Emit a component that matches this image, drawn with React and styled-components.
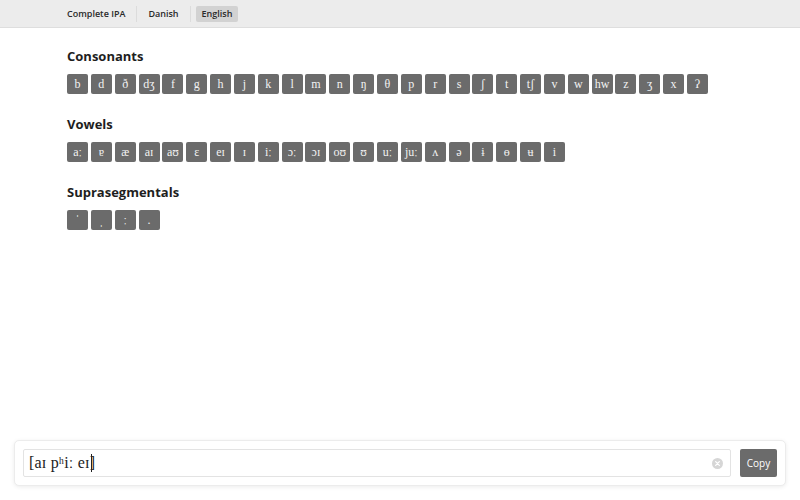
import React from 'react';
import styled, { createGlobalStyle } from 'styled-components';

const GlobalStyle = createGlobalStyle`
  html, body {
    margin: 0;
    padding: 0;
    height: 100%;
    background: #ffffff;
    font-family: "Open Sans", "DejaVu Sans", sans-serif;
  }
  #root {
    height: 100%;
  }
`;

const consonants = ['b', 'd', 'ð', 'dʒ', 'f', 'g', 'h', 'j', 'k', 'l', 'm', 'n', 'ŋ', 'θ', 'p', 'r', 's', 'ʃ', 't', 'tʃ', 'v', 'w', 'hw', 'z', 'ʒ', 'x', 'ʔ'];
const vowels = ['aː', 'ɐ', 'æ', 'aɪ', 'aʊ', 'ɛ', 'eɪ', 'ɪ', 'iː', 'ɔː', 'ɔɪ', 'oʊ', 'ʊ', 'uː', 'juː', 'ʌ', 'ə', 'ɨ', 'ɵ', 'ʉ', 'i'];
const suprasegmentals = ['ˈ', 'ˌ', 'ː', '.'];

const sections = [
  { title: 'Consonants', symbols: consonants },
  { title: 'Vowels', symbols: vowels },
  { title: 'Suprasegmentals', symbols: suprasegmentals },
];

const tabs = ['Complete IPA', 'Danish', 'English'];

function App() {
  return (
    <Page>
      <GlobalStyle />
      <TopBar>
        {tabs.map((tab, i) => (
          <React.Fragment key={tab}>
            {i > 0 && <Divider />}
            <Tab $active={tab === 'English'}>{tab}</Tab>
          </React.Fragment>
        ))}
      </TopBar>

      <Main>
        {sections.map((section) => (
          <Section key={section.title}>
            <Heading>{section.title}</Heading>
            <KeyRow>
              {section.symbols.map((s) => (
                <Key key={s}>{s}</Key>
              ))}
            </KeyRow>
          </Section>
        ))}
      </Main>

      <Footer>
        <Field>
          <FieldText>[aɪ pʰiː eɪ]</FieldText>
          <Caret />
          <ClearIcon viewBox="0 0 12 12">
            <circle cx="6" cy="6" r="6" fill="#d6d6d6" />
            <path d="M4 4 L8 8 M8 4 L4 8" stroke="#ffffff" strokeWidth="1.4" strokeLinecap="round" />
          </ClearIcon>
        </Field>
        <CopyButton>Copy</CopyButton>
      </Footer>
    </Page>
  );
}

const Page = styled.div`
  display: flex;
  flex-direction: column;
  min-height: 100vh;
`;

const TopBar = styled.nav`
  display: flex;
  align-items: center;
  gap: 5px;
  height: 28px;
  padding-left: 61px;
  background: #ececec;
  border-bottom: 1px solid #dedede;
  box-sizing: border-box;
`;

const Tab = styled.div`
  padding: 3px 6px;
  border-radius: 2px;
  font-family: "Open Sans", sans-serif;
  font-size: 9px;
  font-weight: 600;
  line-height: 10px;
  color: #2a2a2a;
  background: ${(p) => (p.$active ? '#d2d2d2' : 'transparent')};
`;

const Divider = styled.span`
  width: 1px;
  height: 16px;
  background: #dcdcdc;
`;

const Main = styled.main`
  flex: 1;
  padding: 20px 67px 0;
`;

const Section = styled.section`
  margin-bottom: 22px;
`;

const Heading = styled.h2`
  margin: 0 0 10px;
  font-family: "Open Sans", sans-serif;
  font-size: 13px;
  font-weight: 700;
  line-height: 16px;
  color: #1e1e1e;
`;

const KeyRow = styled.div`
  display: flex;
  flex-wrap: wrap;
  gap: 2.85px;
`;

const Key = styled.button`
  display: flex;
  align-items: center;
  justify-content: center;
  min-width: 21px;
  height: 20px;
  padding: 0 1px;
  border: none;
  border-radius: 2px;
  background: #6b6b6b;
  color: #f2f2f2;
  font-family: "Liberation Serif", serif;
  font-size: 12px;
  box-sizing: border-box;
  cursor: pointer;
`;

const Footer = styled.footer`
  display: flex;
  align-items: center;
  gap: 9px;
  margin: 0 14px 14px;
  padding: 8px 8px;
  background: #ffffff;
  border: 1px solid #ececec;
  border-radius: 5px;
  box-shadow: 0 1px 4px rgba(0, 0, 0, 0.08);
`;

const Field = styled.div`
  flex: 1;
  display: flex;
  align-items: center;
  height: 28px;
  padding: 0 7px 0 5px;
  border: 1px solid #e3e3e3;
  border-radius: 2px;
  box-sizing: border-box;
`;

const FieldText = styled.span`
  font-family: "Liberation Serif", serif;
  font-size: 16px;
  color: #222222;
  letter-spacing: 0.2px;
`;

const Caret = styled.span`
  width: 1px;
  height: 18px;
  margin-left: -4px;
  margin-right: 4px;
  background: #222222;
`;

const ClearIcon = styled.svg`
  width: 11px;
  height: 11px;
  margin-left: auto;
`;

const CopyButton = styled.button`
  width: 37px;
  height: 28px;
  padding: 0;
  border: none;
  border-radius: 2px;
  background: #6b6b6b;
  color: #ffffff;
  font-family: "Open Sans", sans-serif;
  font-size: 10px;
  cursor: pointer;
`;

export default App;
